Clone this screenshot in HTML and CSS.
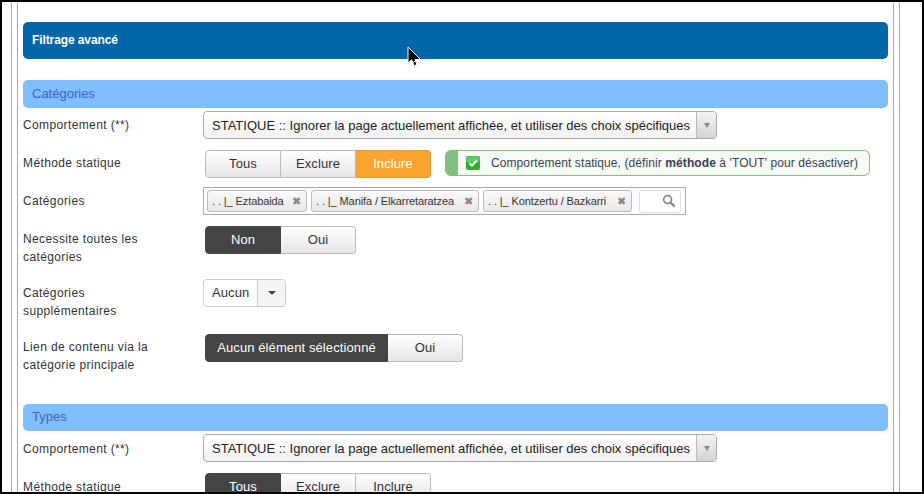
FILE: index.html
```html
<!DOCTYPE html>
<html lang="fr">
<head>
<meta charset="utf-8">
<title>Filtrage avancé</title>
<link rel="stylesheet" href="styles.css">
</head>
<body>
<div class="shot">
  <div class="outer">
    <div class="inner">
      <h2 class="main-head">Filtrage avancé</h2>

      <h3 class="sub-head">Catégories</h3>
      <div class="row r-select">
        <div class="label">Comportement (**)</div>
        <div class="select"><span class="select-text">STATIQUE :: Ignorer la page actuellement affichée, et utiliser des choix spécifiques</span><span class="select-arrow"><i class="tri"></i></span></div>
      </div>
      <div class="row r-method first-method">
        <div class="label">Méthode statique</div>
        <div class="toggle">
          <span class="seg w75">Tous</span><span class="seg w75">Exclure</span><span class="seg w75 orange">Inclure</span>
        </div>
        <div class="notice">
          <svg class="check" width="14" height="14" viewBox="0 0 14 14"><rect x="0" y="0" width="14" height="14" rx="2" fill="#2fae2f"/><rect x="0.5" y="0.5" width="13" height="6" rx="2" fill="#5fd05f"/><path d="M3.5 7.2 L6 9.6 L10.6 4.6" fill="none" stroke="#fff" stroke-width="2"/></svg>
          <span>Comportement statique, (définir <b>méthode</b> à 'TOUT' pour désactiver)</span>
        </div>
      </div>
      <div class="row r-tags">
        <div class="label">Catégories</div>
        <div class="tags">
          <span class="tag t1"><span>. . |_ Eztabaida</span><i class="x">✖</i></span>
          <span class="tag t2"><span>. . |_ Manifa / Elkarretaratzea</span><i class="x">✖</i></span>
          <span class="tag t3"><span>. . |_ Kontzertu / Bazkarri</span><i class="x">✖</i></span>
          <span class="search"><svg width="14" height="14" viewBox="0 0 14 14"><circle cx="5.6" cy="5.6" r="3.9" fill="none" stroke="#888" stroke-width="1.7"/><path d="M8.6 8.6 L12.6 12.6" stroke="#888" stroke-width="2.2"/></svg></span>
        </div>
      </div>
      <div class="row r-need">
        <div class="label">Necessite toutes les catégories</div>
        <div class="toggle">
          <span class="seg w75 dark">Non</span><span class="seg w75">Oui</span>
        </div>
      </div>
      <div class="row r-supp">
        <div class="label">Catégories supplémentaires</div>
        <div class="drop"><span class="drop-text">Aucun</span><span class="drop-arrow"><i class="tri dark-tri"></i></span></div>
      </div>
      <div class="row r-link">
        <div class="label">Lien de contenu via la catégorie principale</div>
        <div class="toggle">
          <span class="seg w183 dark">Aucun élément sélectionné</span><span class="seg w75">Oui</span>
        </div>
      </div>

      <h3 class="sub-head types">Types</h3>
      <div class="row r-select second-select">
        <div class="label">Comportement (**)</div>
        <div class="select"><span class="select-text">STATIQUE :: Ignorer la page actuellement affichée, et utiliser des choix spécifiques</span><span class="select-arrow"><i class="tri"></i></span></div>
      </div>
      <div class="row r-method">
        <div class="label">Méthode statique</div>
        <div class="toggle">
          <span class="seg w75 dark">Tous</span><span class="seg w75">Exclure</span><span class="seg w75">Inclure</span>
        </div>
      </div>
    </div>
  </div>
  <svg class="cursor" width="15" height="22" viewBox="0 0 15 22"><path d="M1 1 V17 L4.6 13.8 L7 19.5 L7.6 19.5 L10 18.5 L8 13.5 L13.4 13.5 Z" fill="#000" stroke="#fff" stroke-width="1"/><path d="M5 17 L9 14.5" stroke="#fff" stroke-width="1"/></svg>
</div>
</body>
</html>
```
FILE: styles.css
```css
* { box-sizing: border-box; }
html, body { margin: 0; padding: 0; background: #fff; }
body { font-family: "Liberation Sans", Arial, sans-serif; font-size: 12px; color: #333; }
.shot { position: relative; width: 924px; height: 494px; border: 2px solid #000; overflow: hidden; background: #fff; }
.outer { margin-left: 9px; width: 889px; height: 490px; border-left: 1px solid #aaa; border-right: 1px solid #aaa; padding-left: 5px; }
.inner { width: 877px; height: 100%; border-left: 1px solid #aaa; border-right: 1px solid #aaa; padding: 20px 5px 0 5px; }
.main-head { margin: 0; height: 37px; line-height: 37px; padding-left: 9px; background: #0066a8; color: #fff; font-size: 12px; font-weight: bold; letter-spacing: -0.1px; border-radius: 5px; }
.sub-head { margin: 21px 0 3px; height: 28px; line-height: 27px; padding-left: 9px; background: #80bfff; color: #3f62c4; font-size: 13px; font-weight: normal; border-radius: 5px; }
.sub-head.types { margin-top: 0; height: 27px; line-height: 25px; }
.row { display: flex; align-items: flex-start; }
.label { width: 180px; flex: none; line-height: 18px; font-size: 12px; letter-spacing: 0.38px; color: #333; padding-top: 5px; }
.r-select { height: 39px; }
.r-method { height: 37px; }
.first-method .label { padding-top: 4px; }
.second-select .label { padding-top: 6px; }
.r-tags { height: 39px; }
.r-need { height: 53px; }
.r-need .label { padding-top: 4px; }
.r-supp { height: 55px; }
.r-link { height: 70px; }
.r-need .label, .r-supp .label, .r-link .label { width: 150px; margin-right: 30px; }
.r-link .label { padding-top: 4px; }
.select { display: flex; width: 514px; height: 28px; border: 1px solid #aaa; border-radius: 4px; background: linear-gradient(#fff, #f1f1f1); color: #222; font-size: 13px; }
.select-text { flex: 1; padding-left: 8px; line-height: 27px; white-space: nowrap; overflow: hidden; letter-spacing: 0.005px; }
.select-arrow { width: 20px; flex: none; border-left: 1px solid #bbb; background: linear-gradient(#f4f4f4, #d4d4d4); display: flex; align-items: center; justify-content: center; border-radius: 0 3px 3px 0; }
.tri { display: block; width: 0; height: 0; border-left: 3.5px solid transparent; border-right: 3.5px solid transparent; border-top: 5px solid #888; }
.dark-tri { border-top-color: #444; border-left-width: 4px; border-right-width: 4px; border-top-width: 4px; }
.toggle { display: flex; margin-left: 2px; height: 28px; border-radius: 4px; font-size: 13px; letter-spacing: 0.1px; }
.seg { display: block; text-align: center; line-height: 25px; height: 28px; border: 1px solid #bbb; border-left: 0; background: linear-gradient(#fff, #e6e6e6); color: #333; }
.seg:first-child { width: 76px; border-left: 1px solid #bbb; border-radius: 4px 0 0 4px; }
.seg:last-child { border-radius: 0 4px 4px 0; }
.w75 { width: 75px; }
.seg.w183 { width: 183px; }
.seg.dark { background: #444; border-color: #444; color: #fff; }
.seg.orange { background: #f9a52f; border-color: #e89a2c; color: #fff; }
.notice { display: flex; align-items: center; margin-left: 14px; width: 425px; height: 26px; border: 1px solid #82c082; border-left: 13px solid #82c082; border-radius: 6px; background: #f6fbf6; padding-left: 8px; color: #3a3f55; font-size: 12px; letter-spacing: 0.09px; }
.check { flex: none; margin-right: 11px; }
.tags { display: flex; align-items: center; width: 483px; height: 28px; border: 1px solid #aaa; padding-left: 3px; }
.tag { display: flex; align-items: center; justify-content: space-between; height: 22px; border: 1px solid #bbb; border-radius: 3px; background: linear-gradient(#fafafa, #e8e8e8); padding: 0 5px 0 4px; font-size: 11px; letter-spacing: -0.1px; color: #333; white-space: nowrap; }
.t1 { width: 100px; margin-right: 4px; }
.t2 { width: 168px; margin-right: 4px; }
.t3 { width: 149px; margin-right: 7px; }
.x { font-style: normal; font-size: 11px; color: #888; }
.search { display: flex; align-items: center; justify-content: flex-end; width: 42px; height: 23px; border: 1px solid #ddd; border-radius: 3px; padding-right: 4px; }
.drop { display: flex; width: 83px; height: 28px; border: 1px solid #ccc; border-radius: 4px; font-size: 13px; letter-spacing: 0.1px; color: #333; }
.drop-text { width: 53px; padding-left: 8px; line-height: 25px; }
.drop-arrow { flex: 1; border-left: 1px solid #ccc; background: #f5f5f5; display: flex; align-items: center; justify-content: center; border-radius: 0 3px 3px 0; }
.cursor { position: absolute; left: 405px; top: 44px; }
```
